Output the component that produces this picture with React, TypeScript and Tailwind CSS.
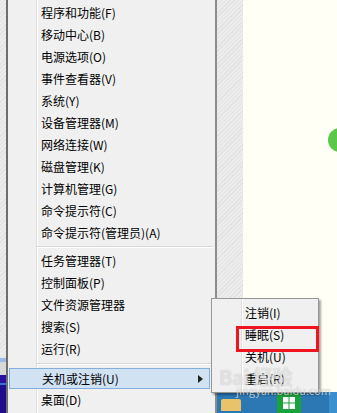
import React from 'react';

const hatch =
  'bg-[repeating-linear-gradient(135deg,#e2e2e2_0px,#e2e2e2_1px,#ececec_1px,#ececec_3px)]';

const groupA = [
  '程序和功能(F)',
  '移动中心(B)',
  '电源选项(O)',
  '事件查看器(V)',
  '系统(Y)',
  '设备管理器(M)',
  '网络连接(W)',
  '磁盘管理(K)',
  '计算机管理(G)',
  '命令提示符(C)',
  '命令提示符(管理员)(A)',
];

const groupB = ['任务管理器(T)', '控制面板(P)', '文件资源管理器', '搜索(S)', '运行(R)'];

const subItems = ['注销(I)', '睡眠(S)', '关机(U)', '重启(R)'];

const Item = ({ label }: { label: string }) => (
  <div className="relative h-[22px] flex items-center pl-[33px] text-[12px] text-black whitespace-nowrap">
    {label}
  </div>
);

const Separator = ({ h }: { h: string }) => (
  <div className={`relative flex flex-col justify-center pl-[29px] pr-[2px] ${h}`}>
    <div className="h-px bg-[#d7d7d7]" />
    <div className="h-px bg-white" />
  </div>
);

export default function App() {
  return (
    <div
      className="relative w-[337px] h-[413px] overflow-hidden bg-[#fffff5] flex"
      style={{ fontFamily: '"Noto Sans CJK SC", "Noto Sans", sans-serif' }}
    >
      {/* left edge strip */}
      <div className={`w-[6px] h-full flex flex-col ${hatch}`}>
        <div className="flex-1" />
        <div className="h-[4px] bg-[#9bbbe0]" />
        <div className="h-[13px] bg-[#d8d8d8]" />
        <div className="h-[8px] bg-[#2a10a0]" />
        <div className="h-[2px] bg-[#3b6fd0]" />
        <div className="h-[28px] bg-[#1e0c8c]" />
      </div>

      {/* main context menu */}
      <div className="relative w-[211px] h-full bg-[#f0f0f0] border-l-2 border-[#6e6e6e] border-r-2 border-r-[#8c8c8c] pt-[2px]">
        <div className="absolute top-0 bottom-0 left-[28px] w-px bg-[#dedede]" />
        <div className="absolute top-0 bottom-0 left-[29px] w-px bg-white" />
        {groupA.map((l) => (
          <Item key={l} label={l} />
        ))}
        <Separator h="h-[6px]" />
        {groupB.map((l) => (
          <Item key={l} label={l} />
        ))}
        <Separator h="h-[8px]" />
        <div className="relative ml-[1px] mr-[5px] h-[21px] flex items-center pl-[32px] pr-[6px] text-[12px] text-black bg-[#d1e2f2] border border-[#84acdd]">
          <span className="flex-1">关机或注销(U)</span>
          <span className="w-0 h-0 border-y-[4px] border-y-transparent border-l-[5px] border-l-[#222]" />
        </div>
        <Item label="桌面(D)" />
      </div>

      {/* desktop side */}
      <div className="flex-1 h-full flex flex-col">
        <div className="flex-1 flex">
          <div className={`w-[26px] ${hatch}`} />
          <div className="flex-1 relative">
            <div className="absolute left-[85px] top-[128px] w-[24px] h-[24px] rounded-full bg-[#5cc84a]" />
          </div>
        </div>
        <div className="h-[21px] bg-[#2c78b4] flex items-end">
          <div className="ml-[4px] w-[20px] h-[12px] bg-[#e8c36a] rounded-t-[2px] mb-[2px]" />
          <div className="ml-[36px] w-[24px] h-[21px] bg-[#1ba23c] flex items-center justify-center">
            <svg width="12" height="12" viewBox="0 0 12 12">
              <rect x="0" y="0" width="5.5" height="5.5" fill="#fff" />
              <rect x="6.5" y="0" width="5.5" height="5.5" fill="#fff" />
              <rect x="0" y="6.5" width="5.5" height="5.5" fill="#fff" />
              <rect x="6.5" y="6.5" width="5.5" height="5.5" fill="#fff" />
            </svg>
          </div>
          <div className="flex-1" />
          <div className="w-[8px] h-[21px] bg-[#3b8fcf]" />
        </div>
      </div>

      {/* submenu */}
      <div className="absolute left-[211px] top-[298px] w-[108px] h-[95px] bg-[#f0f0f0] border border-[#979797] shadow-[2px_2px_2px_rgba(0,0,0,0.35)] pt-[3px]">
        <div className="absolute top-0 bottom-0 left-[29px] w-px bg-[#dedede]" />
        <div className="absolute top-0 bottom-0 left-[30px] w-px bg-white" />
        {subItems.map((l) => (
          <div key={l} className="relative h-[22px] flex items-center pl-[33px] text-[12px] text-black">
            {l}
          </div>
        ))}
      </div>

      {/* highlight box */}
      <div className="absolute left-[236px] top-[326px] w-[83px] h-[26px] border-[3px] border-[#f0141e]" />

      {/* watermark */}
      <div className="absolute left-[219px] top-[362px] text-[20px] font-bold text-white/60 tracking-tight [text-shadow:0_0_1px_rgba(0,0,0,0.25)]">
        Bai 经验
      </div>
      <div className="absolute left-[236px] top-[384px] text-[11px] leading-[12px] text-white/70 [text-shadow:0_0_1px_rgba(0,0,0,0.3)]">
        jingyan.baidu.com
      </div>
    </div>
  );
}
